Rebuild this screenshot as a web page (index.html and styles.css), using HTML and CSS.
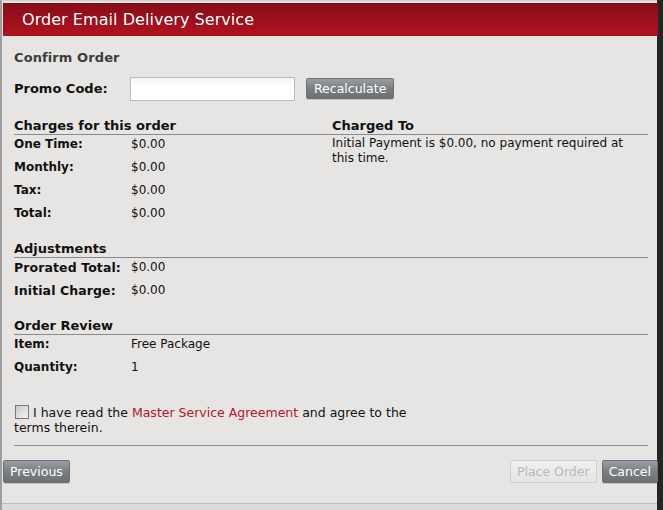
FILE: index.html
```html
<!DOCTYPE html>
<html>
<head>
<meta charset="utf-8">
<link rel="stylesheet" href="styles.css">
</head>
<body>
<div class="dialog">
  <div class="titlebar">Order Email Delivery Service</div>
  <div class="content">
    <div class="subtitle">Confirm Order</div>
    <div class="promo">
      <label class="promo-label">Promo Code:</label>
      <input class="promo-input" type="text">
      <button class="btn btn-recalc">Recalculate</button>
    </div>
    <div class="two-col">
      <div class="col">
        <div class="section-head">Charges for this order</div>
        <div class="rows">
          <div class="lbl">One Time:</div><div class="val">$0.00</div>
          <div class="lbl">Monthly:</div><div class="val">$0.00</div>
          <div class="lbl">Tax:</div><div class="val">$0.00</div>
          <div class="lbl">Total:</div><div class="val">$0.00</div>
        </div>
      </div>
      <div class="col">
        <div class="section-head">Charged To</div>
        <div class="note">Initial Payment is $0.00, no payment required at this time.</div>
      </div>
    </div>
    <div class="section section-adj">
      <div class="section-head">Adjustments</div>
      <div class="rows">
        <div class="lbl lbl-wide">Prorated Total:</div><div class="val">$0.00</div>
        <div class="lbl lbl-wide">Initial Charge:</div><div class="val">$0.00</div>
      </div>
    </div>
    <div class="section section-review">
      <div class="section-head">Order Review</div>
      <div class="rows">
        <div class="lbl">Item:</div><div class="val">Free Package</div>
        <div class="lbl">Quantity:</div><div class="val">1</div>
      </div>
    </div>
    <div class="agree">
      <input type="checkbox" class="check">I have read the <a class="link" href="#">Master Service Agreement</a> and agree to the terms therein.
    </div>
    <div class="divider"></div>
  </div>
  <div class="footer">
    <button class="btn btn-prev">Previous</button>
    <div class="right-btns">
      <button class="btn btn-disabled" disabled>Place Order</button>
      <button class="btn btn-cancel">Cancel</button>
    </div>
  </div>
  <div class="bottom-bar"></div>
</div>
</body>
</html>
```

FILE: styles.css
```css
html, body {
  margin: 0;
  padding: 0;
}
body {
  background: #252525;
  width: 663px;
  height: 510px;
  overflow: hidden;
  font-family: "DejaVu Sans", "Liberation Sans", sans-serif;
  color: #111;
}
.dialog {
  width: 657px;
  height: 510px;
  background: #e6e5e3;
  border-left: 2px solid #9d9d9d;
  border-top: 1px solid #cfcfcf;
  padding: 2px 1px 0 1px;
  box-sizing: border-box;
  display: flex;
  flex-direction: column;
  position: relative;
}
.titlebar {
  height: 33px;
  width: 655px;
  box-sizing: border-box;
  background: linear-gradient(to bottom, #850d18 0%, #b3121f 100%);
  color: #fff;
  font-size: 16px;
  line-height: 34px;
  padding-left: 19px;
  letter-spacing: 0.05px;
  text-shadow: 0 0 1px rgba(0,0,0,0.4);
}
.content {
  padding: 0 9px 0 11px;
}
.subtitle {
  margin-top: 14px;
  font-size: 13px;
  line-height: 16px;
  color: #3c3c3c;
  font-weight: 600;
  letter-spacing: 0.1px;
}
.promo {
  display: flex;
  align-items: center;
  margin-top: 11px;
  height: 23px;
}
.promo-label {
  width: 116px;
  font-size: 13px;
  font-weight: bold;
}
.promo-input {
  width: 165px;
  height: 24px;
  box-sizing: border-box;
  border: 1px solid #b8bccd;
  background: linear-gradient(to bottom, #f3f4f4, #ffffff 40%);
  margin: 0;
  padding: 0 4px;
}
.btn {
  font-family: "DejaVu Sans", sans-serif;
  font-size: 12.5px;
  color: #fff;
  border: 1px solid #6d7075;
  border-radius: 2px;
  background: linear-gradient(to bottom, #9a9da2 0%, #7b7e83 50%, #6c6f74 100%);
  height: 23px;
  padding: 0 6px;
  margin: 0;
  box-shadow: 0 1px 0 rgba(0,0,0,0.15);
}
.btn-recalc {
  margin-left: 11px;
  height: 21px;
  padding: 0 7px;
}
.two-col {
  display: grid;
  grid-template-columns: 318px 316px;
  margin-top: 18px;
}
.section-head {
  font-size: 13px;
  font-weight: bold;
  line-height: 16px;
  border-bottom: 1px solid #8a8a8a;
  color: #111;
}
.rows {
  display: grid;
  grid-template-columns: 117px auto;
  grid-auto-rows: 20px;
  row-gap: 3px;
  align-items: center;
  margin-top: -1px;
}
.lbl {
  font-size: 12px;
  font-weight: bold;
}
.lbl-wide {
  font-size: 12.5px;
  letter-spacing: 0.1px;
}
.val {
  font-size: 12px;
}
.note {
  font-size: 12px;
  line-height: 15px;
  padding-top: 1px;
}
.section {
  width: 634px;
}
.section-adj {
  margin-top: 18px;
}
.section-review {
  margin-top: 18px;
}
.agree {
  margin-top: 28px;
  width: 400px;
  font-size: 12.5px;
  line-height: 15px;
}
.check {
  appearance: none;
  -webkit-appearance: none;
  width: 14px;
  height: 14px;
  margin: 0 4px 0 1px;
  vertical-align: -2px;
  border: 1px solid #7a7a7a;
  background: linear-gradient(135deg, #c8c8c8, #f4f4f4);
  box-sizing: border-box;
}
.link {
  color: #b4162a;
  text-decoration: none;
}
.divider {
  margin-top: 10px;
  width: 634px;
  border-top: 1px solid #8e8e8e;
}
.footer {
  display: flex;
  justify-content: space-between;
  align-items: center;
  margin-top: 14px;
  width: 655px;
}
.right-btns {
  display: flex;
  gap: 5px;
}
.btn-prev {
  padding: 0 6px;
}
.btn-disabled {
  background: linear-gradient(to bottom, #f0efed, #e6e5e3);
  color: #b9b9b9;
  border: 1px solid #d0d0ce;
  box-shadow: none;
}
.btn-cancel {
  padding: 0 6px;
}
.bottom-bar {
  position: absolute;
  left: 0;
  right: 0;
  bottom: 0;
  height: 6px;
  border-top: 1px solid #bdbcba;
  background: #dcdbd9;
}
```
